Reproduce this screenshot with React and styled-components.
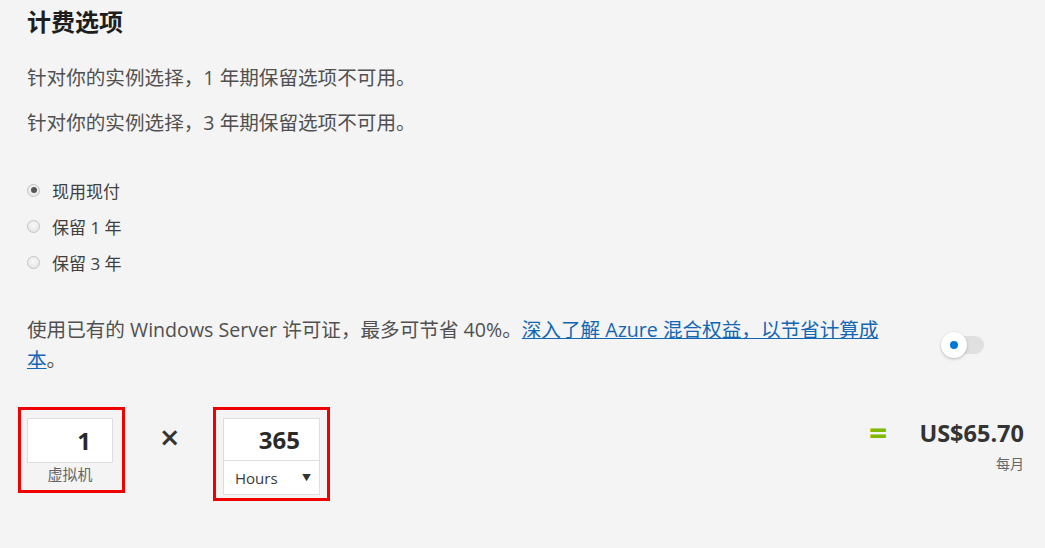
import React from "react";
import styled, { createGlobalStyle } from "styled-components";

const GlobalStyle = createGlobalStyle`
  html, body { margin: 0; padding: 0; background: #f4f4f4; }
  body { font-family: "Open Sans", "Noto Sans CJK SC", sans-serif; color: #505050; }
  * { box-sizing: border-box; }
`;

const Page = styled.div`
  width: 1045px;
  height: 548px;
  padding: 6px 21px 0 27px;
  background: #f4f4f4;
`;

const Title = styled.h2`
  margin: 0;
  font-size: 24px;
  line-height: 32px;
  font-weight: 700;
  color: #1e1e1e;
`;

const Notice = styled.p`
  margin: ${(p) => p.$top}px 0 0;
  font-size: 19.6px;
  line-height: 30px;
  color: #505050;
`;

const RadioGroup = styled.div`
  display: flex;
  flex-direction: column;
  gap: 12px;
  margin-top: 40px;
`;

const RadioRow = styled.label`
  display: flex;
  align-items: center;
  gap: 12px;
  height: 24px;
  font-size: 17px;
  color: #404040;
`;

const RadioDot = styled.span`
  width: 13px;
  height: 13px;
  border-radius: 50%;
  border: 1px solid #c4c4c4;
  background: radial-gradient(circle at 50% 40%, #f8f8f8, #e2e2e2);
  display: flex;
  align-items: center;
  justify-content: center;
  &::after {
    content: "";
    width: 6px;
    height: 6px;
    border-radius: 50%;
    background: ${(p) => (p.$checked ? "#555" : "transparent")};
  }
`;

const LicenseRow = styled.div`
  display: flex;
  align-items: center;
  margin-top: 41px;
`;

const LicenseText = styled.p`
  margin: 0;
  width: 864px;
  font-size: 19.6px;
  line-height: 30px;
  color: #505050;
`;

const Link = styled.a`
  color: #1267b5;
  text-decoration: underline;
`;

const Toggle = styled.div`
  position: relative;
  width: 40px;
  height: 18px;
  margin-left: 53px;
  border-radius: 9px;
  background: #e0e0e0;
`;

const Knob = styled.span`
  position: absolute;
  left: -3px;
  top: -4px;
  width: 26px;
  height: 26px;
  border-radius: 50%;
  background: #fff;
  box-shadow: 0 1px 3px rgba(0, 0, 0, 0.25);
  display: flex;
  align-items: center;
  justify-content: center;
  &::after {
    content: "";
    width: 8px;
    height: 8px;
    border-radius: 50%;
    background: #0078d4;
  }
`;

const CalcRow = styled.div`
  display: flex;
  align-items: flex-start;
  justify-content: space-between;
  margin-top: 32px;
`;

const Factors = styled.div`
  display: flex;
  align-items: flex-start;
  margin-left: -9px;
`;

const Highlight = styled.div`
  border: 3px solid #f00000;
  width: ${(p) => p.$w}px;
  height: ${(p) => p.$h}px;
  padding: ${(p) => p.$pad};
  display: flex;
  flex-direction: column;
`;

const NumberBox = styled.div`
  width: ${(p) => p.$w}px;
  height: ${(p) => p.$h}px;
  background: #fff;
  border: 1px solid #dedede;
  display: flex;
  align-items: center;
  justify-content: flex-end;
  padding-right: ${(p) => p.$pr}px;
  font-size: 24px;
  font-weight: 700;
  color: #2a2a2a;
`;

const Caption = styled.div`
  text-align: center;
  font-size: 15px;
  line-height: 20px;
  margin-top: 1px;
  color: #666;
`;

const SelectBox = styled.div`
  width: 97px;
  height: 34px;
  background: #fff;
  border: 1px solid #dedede;
  border-top: none;
  display: flex;
  align-items: center;
  justify-content: space-between;
  padding: 0 8px 0 11px;
  font-size: 15px;
  color: #3a3a3a;
`;

const Caret = styled.span`
  font-size: 9px;
  color: #333;
`;

const Times = styled.div`
  width: 16px;
  margin: 14px 37px 0 35px;
  font-size: 34px;
  line-height: 32px;
  font-weight: 600;
  color: #333;
  text-align: center;
`;

const Result = styled.div`
  display: flex;
  align-items: flex-start;
  padding-top: 10px;
`;

const Equals = styled.div`
  font-size: 32px;
  line-height: 32px;
  font-weight: 700;
  color: #7fba00;
  margin-right: 32px;
`;

const Price = styled.div`
  display: flex;
  flex-direction: column;
  align-items: flex-end;
`;

const Amount = styled.div`
  font-size: 23.5px;
  line-height: 32px;
  font-weight: 700;
  color: #333;
`;

const Per = styled.div`
  font-size: 14px;
  line-height: 18px;
  margin-top: 6px;
  color: #666;
`;

export default function App() {
  const options = [
    { label: "现用现付", checked: true },
    { label: "保留 1 年", checked: false },
    { label: "保留 3 年", checked: false },
  ];
  return (
    <>
      <GlobalStyle />
      <Page>
        <Title>计费选项</Title>
        <Notice $top={25}>针对你的实例选择，1 年期保留选项不可用。</Notice>
        <Notice $top={15}>针对你的实例选择，3 年期保留选项不可用。</Notice>
        <RadioGroup>
          {options.map((o) => (
            <RadioRow key={o.label}>
              <RadioDot $checked={o.checked} />
              {o.label}
            </RadioRow>
          ))}
        </RadioGroup>
        <LicenseRow>
          <LicenseText>
            使用已有的 Windows Server 许可证，最多可节省 40%。
            <Link href="#">深入了解 Azure 混合权益，以节省计算成本</Link>。
          </LicenseText>
          <Toggle>
            <Knob />
          </Toggle>
        </LicenseRow>
        <CalcRow>
          <Factors>
            <Highlight $w={107} $h={86} $pad="8px 9px 0 6px">
              <NumberBox $w={86} $h={45} $pr={21}>1</NumberBox>
              <Caption>虚拟机</Caption>
            </Highlight>
            <Times>×</Times>
            <Highlight $w={117} $h={94} $pad="8px 7px 0 7px">
              <NumberBox $w={97} $h={43} $pr={19}>365</NumberBox>
              <SelectBox>
                Hours
                <Caret>▼</Caret>
              </SelectBox>
            </Highlight>
          </Factors>
          <Result>
            <Equals>=</Equals>
            <Price>
              <Amount>US$65.70</Amount>
              <Per>每月</Per>
            </Price>
          </Result>
        </CalcRow>
      </Page>
    </>
  );
}
